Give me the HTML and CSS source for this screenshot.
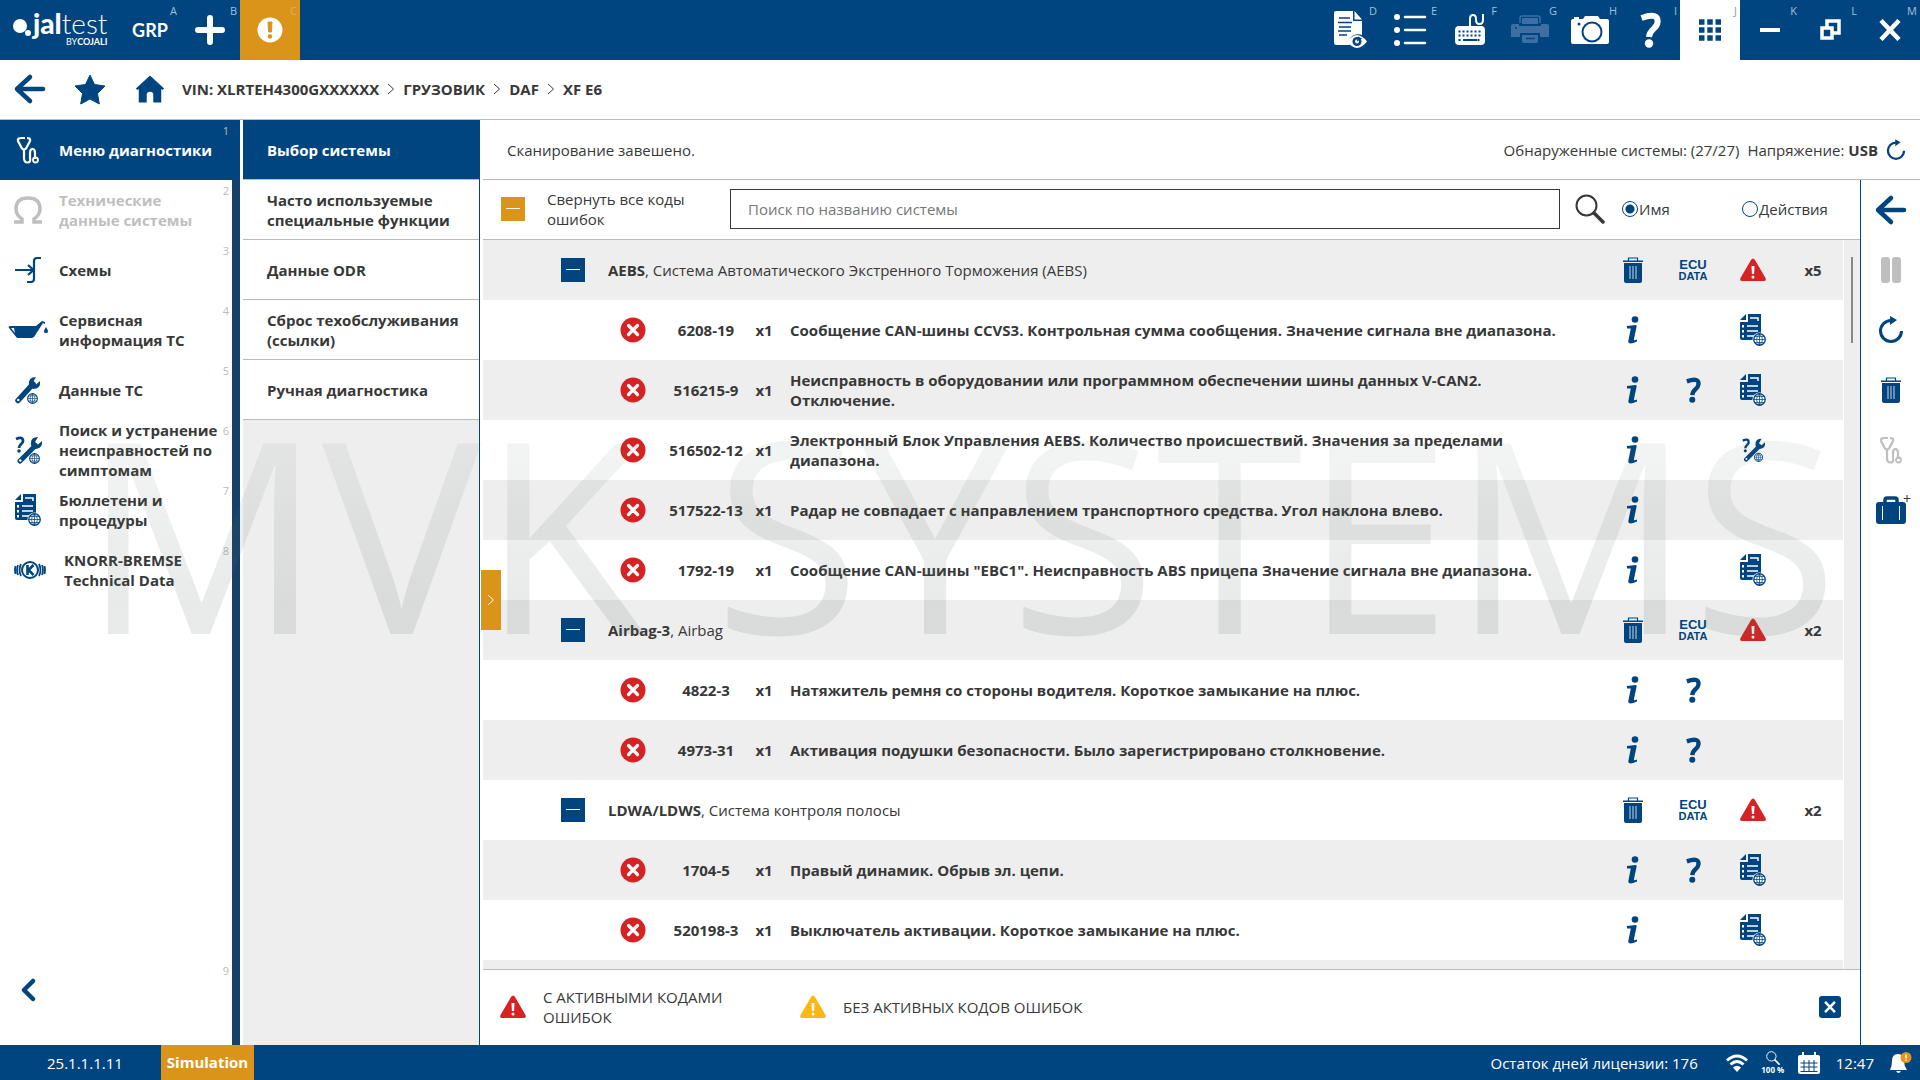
FILE: index.html
```html
<!DOCTYPE html>
<html lang="ru">
<head>
    <meta charset="UTF-8" />
    <meta name="viewport" content="width=device-width, initial-scale=1.0"/>
    <title>Jaltest</title>
    <link rel="stylesheet" href="styles.css">
</head>
<body>

    <!-- Icon set -->
    <svg class="icon-defs" aria-hidden="true">
        <symbol id="i-plus" viewBox="0 0 30 30"><path d="M15 3v24M3 15h24" stroke="currentColor" stroke-width="6" stroke-linecap="round"/></symbol>
        <symbol id="i-alert" viewBox="0 0 26 26"><circle cx="13" cy="13" r="12.5" fill="currentColor"/><path d="M11 5h4l-.6 10h-2.8z" fill="#db941a" stroke="#db941a" stroke-linejoin="round"/><circle cx="13" cy="19.500" r="2.200" fill="#db941a"/></symbol>
        <symbol id="i-arrow" viewBox="0 0 34 34"><path d="M30 17H4M17 5L4 17l13 12" fill="none" stroke="currentColor" stroke-width="4.500" stroke-linecap="round" stroke-linejoin="round"/></symbol>
        <symbol id="i-star" viewBox="0 0 34 34"><path d="M17 3l4.500 9.500 10.500 1.500-7.500 7.500 1.800 10.500-9.300-5-9.300 5L9.500 21.500 2 14l10.500-1.500z" fill="currentColor" stroke="currentColor" stroke-linejoin="round"/></symbol>
        <symbol id="i-home" viewBox="0 0 32 32"><path d="M16 1.500L31 15.500l-1.500 1.500L28 16v14.500h-8.500V22.500q0-3.500-3.500-3.500t-3.500 3.500v8H4V16l-1.500 1L1 15.500z" fill="currentColor"/></symbol>
        <symbol id="i-chevron" viewBox="0 0 8 12"><path d="M1 1l5.500 5L1 11" fill="none" stroke="currentColor"/></symbol>
        <symbol id="i-back" viewBox="0 0 16 24"><path d="M13 3L4 12l9 9" fill="none" stroke="currentColor" stroke-width="4.500" stroke-linecap="round" stroke-linejoin="round"/></symbol>
        <symbol id="i-doceye" viewBox="0 0 34 40"><path d="M3 1h17v10h9v14c-6-2-11 1-14 6q1 3 2 4H3q-2 0-2-2V3q0-2 2-2z" fill="currentColor"/><path d="M21.500 1l7.500 8.500h-7.500z" fill="currentColor"/><path d="M6 8h11M5 12.500h14M6 17h12M5 21h13M6 25h8" stroke="#00457f" stroke-width="1.500"/><path d="M14 31.500q10-13 20 0-10 13-20 0z" fill="currentColor"/><circle cx="24" cy="31.500" r="4.500" fill="#00457f"/><circle cx="24" cy="31.500" r="2" fill="currentColor"/><path d="M24 31.500l1-5 4 2z" fill="#00457f"/></symbol>
        <symbol id="i-list" viewBox="0 0 34 34"><g fill="currentColor"><circle cx="4" cy="4" r="3"/><circle cx="4" cy="17" r="3"/><circle cx="4" cy="30" r="3"/></g><path d="M12 4h20M12 17h20M12 30h20" stroke="currentColor" stroke-width="2.500" stroke-linecap="round"/></symbol>
        <symbol id="i-keyboard" viewBox="0 0 32 34"><path d="M16 14V6q0-4 3-4t3 4v1q0 4 3.500 4T29 7V1" fill="none" stroke="currentColor" stroke-width="2"/><rect x="1" y="13" width="30" height="19" rx="4" fill="currentColor"/><path d="M4.500 18.500h23M4.500 22.500h23M4.500 27h4M23.500 27h4" stroke="#00457f" stroke-width="2" stroke-dasharray="2 2"/><path d="M9 27h14" stroke="#00457f" stroke-width="2"/></symbol>
        <symbol id="i-printer" viewBox="0 0 38 30"><path d="M9 8V3q0-2 2-2h16q2 0 2 2v5" fill="none" stroke="currentColor" stroke-width="1.500"/><path d="M11 3h16v6H11zM2 9h6v2h22V9h6q2 0 2 2v11h-9v-3q0-1-1-1H10q-1 0-1 1v3H0V11q0-2 2-2z" fill="currentColor"/><path d="M11 20h16v6q0 2-2 2H13q-2 0-2-2z" fill="currentColor"/><path d="M15 23.500h9" stroke="#00457f" stroke-width="1.500"/><circle cx="5" cy="13" r="1" fill="#00457f"/></symbol>
        <symbol id="i-camera" viewBox="0 0 38 30"><path d="M2 4h1V2h5v2h4l2-3h13l2 3h7q2 0 2 2v21q0 2-2 2H2q-2 0-2-2V6q0-2 2-2z" fill="currentColor"/><circle cx="21" cy="17" r="9.500" fill="none" stroke="#00457f" stroke-width="2"/><circle cx="8" cy="9" r="1.500" fill="#00457f"/></symbol>
        <symbol id="i-help" viewBox="0 0 22 36"><path d="M2.500 6Q20 0 18.500 10.500C18 17 10.500 17 10 25" fill="none" stroke="currentColor" stroke-width="6"/><circle cx="10" cy="31.500" r="4.200" fill="currentColor"/></symbol>
        <symbol id="i-apps" viewBox="0 0 22 22"><path d="M0 3h22M0 11h22M0 19h22" stroke="currentColor" stroke-width="5.500" stroke-dasharray="5.500 2.750"/></symbol>
        <symbol id="i-min" viewBox="0 0 22 22"><path d="M1 11h20" stroke="currentColor" stroke-width="4"/></symbol>
        <symbol id="i-restore" viewBox="0 0 22 22"><path d="M8 8V2h12v12h-6" fill="none" stroke="currentColor" stroke-width="3.500"/><rect x="3" y="9" width="10" height="10" fill="none" stroke="currentColor" stroke-width="3.500"/></symbol>
        <symbol id="i-close" viewBox="0 0 22 22"><path d="M2 1.500l18 19M20 1.500l-18 19" stroke="currentColor" stroke-width="4.500"/></symbol>
        <symbol id="i-stetho" viewBox="0 0 24 28"><path d="M9 2H6Q1 2 2 5l4 7.500q2 2 4 0L14 5q1-3-3-3" fill="none" stroke="currentColor" stroke-width="2.200"/><path d="M8 13v9q0 4.500 3.500 4.500T14 22v-5q0-4 2.500-4t2.500 4v6" fill="none" stroke="currentColor" stroke-width="2.200"/><circle cx="19.500" cy="24" r="2.500" fill="none" stroke="currentColor" stroke-width="1.800"/></symbol>
        <symbol id="i-omega" viewBox="0 0 30 28"><path d="M1 26h8v-3Q3 19 3 13 3 2 15 2t12 11q0 6-6 10v3h8" fill="none" stroke="currentColor" stroke-width="3.500"/></symbol>
        <symbol id="i-scheme" viewBox="0 0 28 28"><path d="M27 2h-4q-3 0-3 3v18q0 3-3 3h-4M1 14h18M14 9l5.500 5-5.500 5" fill="none" stroke="currentColor" stroke-width="2.200"/></symbol>
        <symbol id="i-oil" viewBox="0 0 40 20"><path d="M8 6h20l6-5 3 1v2l-2-1-9 14-2 1H9L1 8q-1-2 1-2h4zM3 8l4 5-1-5z" fill="currentColor" fill-rule="evenodd"/><path d="M38 7q4 6 0 6t0-6z" fill="currentColor"/></symbol>
        <symbol id="i-globe" viewBox="0 0 12 12"><circle cx="6" cy="6" r="5.300" fill="#fff" stroke="currentColor" stroke-width="1.200"/><path d="M6 .500v11M.500 6h11M1.500 3.200h9M1.500 8.800h9M6 .700Q.500 6 6 11.300 11.500 6 6 .700" fill="none" stroke="currentColor" stroke-width=".700"/></symbol>
        <symbol id="i-wrench" viewBox="0 0 28 28"><path d="M4 24.500L19 8" stroke="currentColor" stroke-width="5.500" stroke-linecap="round"/><path d="M22 1q-8 0-7 8l4 4q8 0 7-8l-4 3.500-3-2.500z" fill="currentColor"/><circle cx="4.300" cy="24" r="1.200" fill="#fff"/><use href="#i-globe" x="13" y="17" width="11" height="11"/></symbol>
        <symbol id="i-wrenchq" viewBox="0 0 28 28"><path d="M2 3q7-3 7 2c0 3-4 3-4 7" fill="none" stroke="currentColor" stroke-width="2.800"/><circle cx="5" cy="15" r="1.800" fill="currentColor"/><path d="M6 25L21 10" stroke="currentColor" stroke-width="5" stroke-linecap="round"/><path d="M24 1q-8 0-7 8l3 4q9 0 8-8l-4 3.500-3-2.500z" fill="currentColor"/><circle cx="6.300" cy="24.500" r="1.200" fill="#fff"/><use href="#i-globe" x="15" y="17" width="11" height="11"/></symbol>
        <symbol id="i-bulletin" viewBox="0 0 26 32"><path d="M8 0h13v26H2q-2 0-2-2V8h8z" fill="currentColor"/><path d="M6 0v6H0z" fill="currentColor"/><path d="M10 4h8v3M7 12h11M7 17h11M7 22h7" fill="none" stroke="#fff" stroke-width="1.500"/><path d="M3 11v2.500M3 16v2.500M3 21v2.500" stroke="#fff" stroke-width="2"/><circle cx="19.500" cy="25.500" r="7" fill="#fff"/><use href="#i-globe" x="13" y="19" width="13" height="13"/></symbol>
        <symbol id="i-knorr" viewBox="0 0 32 20"><circle cx="16" cy="10" r="8" fill="none" stroke="currentColor" stroke-width="2"/><path d="M13.500 5v10M19.500 5l-5 5 5 5" fill="none" stroke="currentColor" stroke-width="2.600"/><path d="M7 4q-3 6 0 12M4 5q-2 5 0 10M1.500 6q-1 4 0 8M25 4q3 6 0 12M28 5q2 5 0 10M30.500 6q1 4 0 8" fill="none" stroke="currentColor" stroke-width="1.800"/></symbol>
        <symbol id="i-search" viewBox="0 0 30 30"><circle cx="11.500" cy="11.500" r="10" fill="none" stroke="currentColor" stroke-width="2"/><path d="M19 19l9 9" stroke="currentColor" stroke-width="3.500" stroke-linecap="round"/></symbol>
        <symbol id="i-minus" viewBox="0 0 14 12"><path d="M0 5.500h14" stroke="currentColor"/></symbol>
        <symbol id="i-trash" viewBox="0 0 20 26"><path d="M0 3.500h20V5H0zM1 6h18v18q0 2-2 2H3q-2 0-2-2z" fill="currentColor"/><path d="M5.500 4V1h9v3" fill="none" stroke="currentColor" stroke-width="1.200"/><path d="M7 9v13M10 9v13M13 9v13" stroke="#fff" stroke-width=".800"/></symbol>
        <symbol id="i-warn" viewBox="0 0 26 24"><path d="M11 2q2-3 4 0l10.500 18q1 3-1.500 3H2q-2.500 0-1.500-3z" fill="currentColor"/><path d="M11.500 8h3l-.400 8h-2.200z" fill="#fff"/><circle cx="13" cy="19" r="1.500" fill="#fff"/></symbol>
        <symbol id="i-fault" viewBox="0 0 26 26"><circle cx="13" cy="13" r="12.500" fill="#d62222"/><path d="M8.500 8.500l9 9M17.500 8.500l-9 9" stroke="#fff" stroke-width="3.200" stroke-linecap="round"/></symbol>
        <symbol id="i-info" viewBox="0 0 14 28"><circle cx="9" cy="3.500" r="3.300" fill="currentColor"/><path d="M1 10l8.500-1q1.500 0 1 2L8 23q-.500 2 3 .500v2Q1 30 2.500 24l2.300-11.500H1z" fill="currentColor"/></symbol>
        <symbol id="i-refresh" viewBox="0 0 26 28"><path d="M23.500 15A10.500 10.500 0 1 1 13 4.500" fill="none" stroke="currentColor" stroke-width="3"/><path d="M12 0l7 4-7 5z" fill="currentColor"/></symbol>
        <symbol id="i-pause" viewBox="0 0 20 26"><rect width="9" height="26" rx="3" fill="currentColor"/><rect x="11" width="9" height="26" rx="3" fill="currentColor"/></symbol>
        <symbol id="i-case" viewBox="0 0 30 28"><path d="M9 7V4q0-2 2-2h8q2 0 2 2v3" fill="none" stroke="currentColor" stroke-width="3.500"/><rect y="6" width="30" height="22" rx="3" fill="currentColor"/><path d="M6.500 10v14M23.500 10v14" stroke="#fff"/></symbol>
        <symbol id="i-wifi" viewBox="0 0 22 18"><path d="M1 6.500q10-9 20 0M4.500 10.500q6.500-6 13 0" fill="none" stroke="currentColor" stroke-width="3"/><path d="M7 13.500q4-3.500 8 0l-4 4.500z" fill="currentColor"/></symbol>
        <symbol id="i-calendar" viewBox="0 0 22 22"><rect y="3" width="22" height="19" rx="2" fill="currentColor"/><path d="M5 0v6M17 0v6" stroke="currentColor" stroke-width="2"/><path d="M2.500 11h17M2.500 15h17M2.500 19.500h17M6 8v12M11 8v12M16 8v12" stroke="#00457f"/></symbol>
        <symbol id="i-bell" viewBox="0 0 22 22"><path d="M8 2q6 0 6 7 0 5 3 9H0q2-4 2-9 0-7 6-7zM6 19h5q-2.500 4-5 0z" fill="currentColor"/><circle cx="16" cy="5.500" r="5.500" fill="#e5931a"/><path d="M16 2.500v4M16 7.500v1.500" stroke="#fff" stroke-width="1.500"/></symbol>
    </svg>

    <!-- Top bar -->
    <header class="topbar">
        <a href="#" class="logo" aria-label="Jaltest by Cojali">
            <svg class="logo-dots" viewBox="0 0 20 18"><circle cx="7" cy="7" r="7" fill="#fff"/><circle cx="15" cy="14" r="3" fill="#fff"/></svg>
            <span class="logo-text">
                <span class="logo-name"><b>jal</b>test</span>
                <span class="logo-sub">BY<b>COJALI</b></span>
            </span>
        </a>
        <button class="tool tool-grp">GRP<span class="key">A</span></button>
        <button class="tool" aria-label="Добавить"><svg width="30" height="30"><use href="#i-plus"/></svg><span class="key">B</span></button>
        <button class="tool tool-alert" aria-label="Предупреждения"><svg width="26" height="26"><use href="#i-alert"/></svg><span class="key">C</span></button>
        <div class="spacer"></div>
        <button class="tool" aria-label="Отчет"><svg width="34" height="40"><use href="#i-doceye"/></svg><span class="key">D</span></button>
        <button class="tool" aria-label="Список"><svg width="34" height="34"><use href="#i-list"/></svg><span class="key">E</span></button>
        <button class="tool" aria-label="Клавиатура"><svg width="32" height="34"><use href="#i-keyboard"/></svg><span class="key">F</span></button>
        <button class="tool tool-off" aria-label="Печать" disabled><svg width="38" height="30"><use href="#i-printer"/></svg><span class="key">G</span></button>
        <button class="tool" aria-label="Снимок экрана"><svg width="38" height="30"><use href="#i-camera"/></svg><span class="key">H</span></button>
        <button class="tool" aria-label="Помощь"><svg width="22" height="36"><use href="#i-help"/></svg><span class="key">I</span></button>
        <button class="tool tool-active" aria-label="Приложения"><svg width="22" height="22"><use href="#i-apps"/></svg><span class="key">J</span></button>
        <button class="tool" aria-label="Свернуть"><svg width="22" height="22"><use href="#i-min"/></svg><span class="key">K</span></button>
        <button class="tool" aria-label="Восстановить"><svg width="22" height="22"><use href="#i-restore"/></svg><span class="key">L</span></button>
        <button class="tool" aria-label="Закрыть"><svg width="22" height="22"><use href="#i-close"/></svg><span class="key">M</span></button>
    </header>

    <!-- Breadcrumbs -->
    <nav class="crumbs">
        <button class="square" aria-label="Назад"><svg width="34" height="34"><use href="#i-arrow"/></svg></button>
        <button class="square" aria-label="Избранное"><svg width="34" height="34"><use href="#i-star"/></svg></button>
        <button class="square" aria-label="Домой"><svg width="30" height="30"><use href="#i-home"/></svg></button>
        <div class="crumb-list">
            <a href="#">VIN: XLRTEH4300GXXXXXX</a>
            <svg width="8" height="12"><use href="#i-chevron"/></svg>
            <a href="#">ГРУЗОВИК</a>
            <svg width="8" height="12"><use href="#i-chevron"/></svg>
            <a href="#">DAF</a>
            <svg width="8" height="12"><use href="#i-chevron"/></svg>
            <a href="#">XF E6</a>
        </div>
    </nav>

    <div class="workspace">
        <!-- Main menu -->
        <nav class="menu">
            <button class="menu-item menu-item-active"><span class="menu-icon"><svg width="24" height="28"><use href="#i-stetho"/></svg></span>Меню диагностики<span class="key">1</span></button>
            <button class="menu-item" disabled><span class="menu-icon"><svg width="30" height="28"><use href="#i-omega"/></svg></span>Технические данные системы<span class="key">2</span></button>
            <button class="menu-item"><span class="menu-icon"><svg width="28" height="28"><use href="#i-scheme"/></svg></span>Схемы<span class="key">3</span></button>
            <button class="menu-item"><span class="menu-icon"><svg width="40" height="20"><use href="#i-oil"/></svg></span>Сервисная информация ТС<span class="key">4</span></button>
            <button class="menu-item"><span class="menu-icon"><svg width="28" height="28"><use href="#i-wrench"/></svg></span>Данные ТС<span class="key">5</span></button>
            <button class="menu-item"><span class="menu-icon"><svg width="28" height="28"><use href="#i-wrenchq"/></svg></span>Поиск и устранение неисправностей по симптомам<span class="key">6</span></button>
            <button class="menu-item"><span class="menu-icon"><svg width="26" height="32"><use href="#i-bulletin"/></svg></span>Бюллетени и процедуры<span class="key">7</span></button>
            <button class="menu-item menu-item-brand"><span class="menu-icon"><svg width="32" height="20"><use href="#i-knorr"/></svg></span>KNORR-BREMSE Technical Data<span class="key">8</span></button>
            <button class="menu-item menu-collapse" aria-label="Свернуть меню"><span class="menu-icon"><svg width="16" height="24"><use href="#i-back"/></svg></span><span class="key">9</span></button>
        </nav>

        <nav class="submenu">
            <a href="#" class="submenu-item submenu-item-active">Выбор системы</a>
            <a href="#" class="submenu-item">Часто используемые специальные функции</a>
            <a href="#" class="submenu-item">Данные ODR</a>
            <a href="#" class="submenu-item">Сброс техобслуживания (ссылки)</a>
            <a href="#" class="submenu-item">Ручная диагностика</a>
        </nav>

        <main class="content">
            <button class="drawer-tab" aria-label="Развернуть панель"><svg width="8" height="12"><use href="#i-chevron"/></svg></button>

            <div class="scan-state">
                <span>Сканирование завешено.</span>
                <div class="spacer"></div>
                <span>Обнаруженные системы: (27/27)</span>
                <span>Напряжение: <b>USB</b></span>
                <button class="plain" aria-label="Обновить напряжение"><svg width="20" height="22"><use href="#i-refresh"/></svg></button>
            </div>

            <div class="body">
                <section class="panel">
                    <div class="filters">
                        <button class="toggle toggle-all" id="collapseAll" aria-label="Свернуть все"><svg width="14" height="12"><use href="#i-minus"/></svg></button>
                        <label for="collapseAll">Свернуть все коды ошибок</label>
                        <input type="text" class="search" aria-label="Поиск" placeholder="Поиск по названию системы">
                        <button class="plain find" aria-label="Найти"><svg width="30" height="30"><use href="#i-search"/></svg></button>
                        <label class="radio"><input type="radio" name="mode" checked>Имя</label>
                        <label class="radio"><input type="radio" name="mode">Действия</label>
                    </div>

                    <div class="list">
                        <div class="list-scroll">
                            <table>
                                <colgroup>
                                    <col class="c-icon"><col class="c-icon"><col class="c-icon"><col class="c-code"><col class="c-count"><col>
                                    <col class="c-icon"><col class="c-icon"><col class="c-icon"><col class="c-icon">
                                </colgroup>
                                <tbody>
                                    <tr class="system">
                                        <td></td>
                                        <td><button class="toggle" aria-label="Свернуть AEBS"><svg width="14" height="12"><use href="#i-minus"/></svg></button></td>
                                        <td class="name" colspan="4"><b>AEBS</b>, Система Автоматического Экстренного Торможения (AEBS)</td>
                                        <td><button class="plain" aria-label="Удалить"><svg width="20" height="26"><use href="#i-trash"/></svg></button></td>
                                        <td><button class="plain ecu">ECU<small>DATA</small></button></td>
                                        <td><svg class="red" width="26" height="24"><use href="#i-warn"/></svg></td>
                                        <td><b>x5</b></td>
                                    </tr>
                                    <tr>
                                        <td></td><td></td>
                                        <td><svg width="26" height="26"><use href="#i-fault"/></svg></td>
                                        <td>6208-19</td><td>x1</td>
                                        <td class="desc">Сообщение CAN-шины CCVS3. Контрольная сумма сообщения. Значение сигнала вне диапазона.</td>
                                        <td><button class="plain" aria-label="Информация"><svg width="14" height="28"><use href="#i-info"/></svg></button></td>
                                        <td></td>
                                        <td><button class="plain" aria-label="Бюллетень"><svg width="26" height="32"><use href="#i-bulletin"/></svg></button></td>
                                        <td></td>
                                    </tr>
                                    <tr>
                                        <td></td><td></td>
                                        <td><svg width="26" height="26"><use href="#i-fault"/></svg></td>
                                        <td>516215-9</td><td>x1</td>
                                        <td class="desc">Неисправность в оборудовании или программном обеспечении шины данных V-CAN2. Отключение.</td>
                                        <td><button class="plain" aria-label="Информация"><svg width="14" height="28"><use href="#i-info"/></svg></button></td>
                                        <td><button class="plain" aria-label="Помощь"><svg width="18" height="26"><use href="#i-help"/></svg></button></td>
                                        <td><button class="plain" aria-label="Бюллетень"><svg width="26" height="32"><use href="#i-bulletin"/></svg></button></td>
                                        <td></td>
                                    </tr>
                                    <tr>
                                        <td></td><td></td>
                                        <td><svg width="26" height="26"><use href="#i-fault"/></svg></td>
                                        <td>516502-12</td><td>x1</td>
                                        <td class="desc">Электронный Блок Управления AEBS. Количество происшествий. Значения за пределами диапазона.</td>
                                        <td><button class="plain" aria-label="Информация"><svg width="14" height="28"><use href="#i-info"/></svg></button></td>
                                        <td></td>
                                        <td><button class="plain" aria-label="Поиск неисправностей"><svg width="24" height="24"><use href="#i-wrenchq"/></svg></button></td>
                                        <td></td>
                                    </tr>
                                    <tr>
                                        <td></td><td></td>
                                        <td><svg width="26" height="26"><use href="#i-fault"/></svg></td>
                                        <td>517522-13</td><td>x1</td>
                                        <td class="desc">Радар не совпадает с направлением транспортного средства. Угол наклона влево.</td>
                                        <td><button class="plain" aria-label="Информация"><svg width="14" height="28"><use href="#i-info"/></svg></button></td>
                                        <td></td><td></td><td></td>
                                    </tr>
                                    <tr>
                                        <td></td><td></td>
                                        <td><svg width="26" height="26"><use href="#i-fault"/></svg></td>
                                        <td>1792-19</td><td>x1</td>
                                        <td class="desc">Сообщение CAN-шины "EBC1". Неисправность ABS прицепа Значение сигнала вне диапазона.</td>
                                        <td><button class="plain" aria-label="Информация"><svg width="14" height="28"><use href="#i-info"/></svg></button></td>
                                        <td></td>
                                        <td><button class="plain" aria-label="Бюллетень"><svg width="26" height="32"><use href="#i-bulletin"/></svg></button></td>
                                        <td></td>
                                    </tr>
                                    <tr class="system">
                                        <td></td>
                                        <td><button class="toggle" aria-label="Свернуть Airbag-3"><svg width="14" height="12"><use href="#i-minus"/></svg></button></td>
                                        <td class="name" colspan="4"><b>Airbag-3</b>, Airbag</td>
                                        <td><button class="plain" aria-label="Удалить"><svg width="20" height="26"><use href="#i-trash"/></svg></button></td>
                                        <td><button class="plain ecu">ECU<small>DATA</small></button></td>
                                        <td><svg class="red" width="26" height="24"><use href="#i-warn"/></svg></td>
                                        <td><b>x2</b></td>
                                    </tr>
                                    <tr>
                                        <td></td><td></td>
                                        <td><svg width="26" height="26"><use href="#i-fault"/></svg></td>
                                        <td>4822-3</td><td>x1</td>
                                        <td class="desc">Натяжитель ремня со стороны водителя. Короткое замыкание на плюс.</td>
                                        <td><button class="plain" aria-label="Информация"><svg width="14" height="28"><use href="#i-info"/></svg></button></td>
                                        <td><button class="plain" aria-label="Помощь"><svg width="18" height="26"><use href="#i-help"/></svg></button></td>
                                        <td></td><td></td>
                                    </tr>
                                    <tr>
                                        <td></td><td></td>
                                        <td><svg width="26" height="26"><use href="#i-fault"/></svg></td>
                                        <td>4973-31</td><td>x1</td>
                                        <td class="desc">Активация подушки безопасности. Было зарегистрировано столкновение.</td>
                                        <td><button class="plain" aria-label="Информация"><svg width="14" height="28"><use href="#i-info"/></svg></button></td>
                                        <td><button class="plain" aria-label="Помощь"><svg width="18" height="26"><use href="#i-help"/></svg></button></td>
                                        <td></td><td></td>
                                    </tr>
                                    <tr class="system">
                                        <td></td>
                                        <td><button class="toggle" aria-label="Свернуть LDWA/LDWS"><svg width="14" height="12"><use href="#i-minus"/></svg></button></td>
                                        <td class="name" colspan="4"><b>LDWA/LDWS</b>, Система контроля полосы</td>
                                        <td><button class="plain" aria-label="Удалить"><svg width="20" height="26"><use href="#i-trash"/></svg></button></td>
                                        <td><button class="plain ecu">ECU<small>DATA</small></button></td>
                                        <td><svg class="red" width="26" height="24"><use href="#i-warn"/></svg></td>
                                        <td><b>x2</b></td>
                                    </tr>
                                    <tr>
                                        <td></td><td></td>
                                        <td><svg width="26" height="26"><use href="#i-fault"/></svg></td>
                                        <td>1704-5</td><td>x1</td>
                                        <td class="desc">Правый динамик. Обрыв эл. цепи.</td>
                                        <td><button class="plain" aria-label="Информация"><svg width="14" height="28"><use href="#i-info"/></svg></button></td>
                                        <td><button class="plain" aria-label="Помощь"><svg width="18" height="26"><use href="#i-help"/></svg></button></td>
                                        <td><button class="plain" aria-label="Бюллетень"><svg width="26" height="32"><use href="#i-bulletin"/></svg></button></td>
                                        <td></td>
                                    </tr>
                                    <tr>
                                        <td></td><td></td>
                                        <td><svg width="26" height="26"><use href="#i-fault"/></svg></td>
                                        <td>520198-3</td><td>x1</td>
                                        <td class="desc">Выключатель активации. Короткое замыкание на плюс.</td>
                                        <td><button class="plain" aria-label="Информация"><svg width="14" height="28"><use href="#i-info"/></svg></button></td>
                                        <td></td>
                                        <td><button class="plain" aria-label="Бюллетень"><svg width="26" height="32"><use href="#i-bulletin"/></svg></button></td>
                                        <td></td>
                                    </tr>
                                    <tr><td colspan="10"></td></tr>
                                </tbody>
                            </table>
                        </div>
                        <div class="track"><div class="thumb"></div></div>
                    </div>

                    <!-- Legend -->
                    <footer class="legend">
                        <div class="legend-item"><svg class="red" width="26" height="24"><use href="#i-warn"/></svg><span>С АКТИВНЫМИ КОДАМИ ОШИБОК</span></div>
                        <div class="legend-item legend-wide"><svg class="yellow" width="26" height="24"><use href="#i-warn"/></svg><span>БЕЗ АКТИВНЫХ КОДОВ ОШИБОК</span></div>
                        <div class="spacer"></div>
                        <button class="legend-close" aria-label="Закрыть"><svg width="12" height="12"><use href="#i-close"/></svg></button>
                    </footer>
                </section>

                <aside class="rail">
                    <button class="square" aria-label="Назад"><svg width="34" height="34"><use href="#i-arrow"/></svg></button>
                    <button class="square" aria-label="Пауза" disabled><svg width="20" height="26"><use href="#i-pause"/></svg></button>
                    <button class="square" aria-label="Повторить"><svg width="26" height="28"><use href="#i-refresh"/></svg></button>
                    <button class="square" aria-label="Удалить"><svg width="20" height="26"><use href="#i-trash"/></svg></button>
                    <button class="square" aria-label="Диагностика" disabled><svg width="24" height="28"><use href="#i-stetho"/></svg></button>
                    <button class="square" aria-label="Чемодан"><svg width="30" height="28"><use href="#i-case"/></svg><span class="key">+</span></button>
                </aside>
            </div>
        </main>
    </div>

    <!-- Status bar -->
    <footer class="status">
        <span class="version">25.1.1.1.11</span>
        <span class="simulation">Simulation</span>
        <div class="spacer"></div>
        <span class="license">Остаток дней лицензии: 176</span>
        <span class="status-icon"><svg width="22" height="18"><use href="#i-wifi"/></svg></span>
        <span class="status-icon status-zoom"><svg width="14" height="14"><use href="#i-search"/></svg><small>100 %</small></span>
        <span class="status-icon"><svg width="22" height="22"><use href="#i-calendar"/></svg></span>
        <time>12:47</time>
        <span class="status-icon"><svg width="22" height="22"><use href="#i-bell"/></svg></span>
    </footer>

    <div class="watermark">MVK SYSTEMS</div>
</body>
</html>
```
FILE: styles.css
```css
* {
    margin: 0;
    padding: 0;
    box-sizing: border-box;
}

:root {
    --blue: #00457f;
    --orange: #db941a;
    --line: #bbb;
    --text: #383838;
}

body {
    font-family: "Open Sans", "Noto Sans", sans-serif;
    font-size: 15px;
    line-height: 20px;
    color: var(--text);
    background: #fff;
    height: 100vh;
    display: flex;
    flex-direction: column;
    overflow: hidden;
}

button {
    font: inherit;
    color: inherit;
    background: none;
    border: none;
    cursor: pointer;
}

a {
    color: inherit;
    text-decoration: none;
}

svg {
    display: block;
    flex: none;
}

.icon-defs {
    display: none;
}

.spacer {
    flex: 1;
}

.key {
    position: absolute;
    top: 4px;
    right: 3px;
    font-size: 11px;
    line-height: 14px;
    font-weight: 400;
    color: #9fc0dd;
}

/* Top bar */
.topbar {
    display: flex;
    height: 60px;
    flex: none;
    background: var(--blue);
    color: #fff;
}

.logo {
    display: flex;
    width: 120px;
    padding: 9px 0 0 13px;
}

.logo-dots {
    width: 20px;
    height: 18px;
    margin-top: 10px;
}

.logo-text {
    display: flex;
    flex-direction: column;
    font-family: Lato, sans-serif;
}

.logo-name {
    font-size: 28px;
    line-height: 28px;
    font-weight: 300;
}

.logo-name b {
    font-weight: 900;
}

.logo-sub {
    font-size: 9px;
    line-height: 10px;
    text-align: right;
}

.tool {
    position: relative;
    width: 60px;
    display: flex;
    align-items: center;
    justify-content: center;
}

.tool-grp {
    font-family: Lato, sans-serif;
    font-size: 18px;
    font-weight: 700;
}

.tool .key {
    font-family: "Open Sans", "Noto Sans", sans-serif;
}

.tool-alert {
    background: var(--orange);
}

.tool-alert .key {
    color: #e6ad52;
}

.tool-off svg {
    color: #3d6fa3;
}

.tool-active {
    background: #fff;
    color: var(--blue);
}

.tool-active .key {
    color: #999;
}

/* Breadcrumbs */
.crumbs {
    display: flex;
    align-items: center;
    height: 60px;
    flex: none;
    padding-bottom: 1px;
    border-bottom: 1px solid var(--line);
}

.square {
    position: relative;
    width: 60px;
    height: 60px;
    display: flex;
    align-items: center;
    justify-content: center;
    color: var(--blue);
}

.crumbs .square {
    height: 58px;
}

.square:disabled {
    color: #bfbfbf;
}

.square .key {
    font-size: 14px;
    color: var(--text);
    top: 12px;
    right: 10px;
}

.crumb-list {
    display: flex;
    align-items: center;
    gap: 8px;
    padding-left: 2px;
    font-weight: 700;
}

.workspace {
    flex: 1;
    min-height: 0;
    display: flex;
}

/* Main menu */
.menu {
    width: 240px;
    flex: none;
    display: flex;
    flex-direction: column;
    padding-bottom: 25px;
    border-right: 8px solid #14406a;
}

.menu-item {
    position: relative;
    display: flex;
    align-items: center;
    height: 60px;
    flex: none;
    padding-right: 8px;
    font-weight: 700;
    text-align: left;
}

.menu-item:disabled {
    color: #bfbfbf;
}

.menu-item .key {
    color: #bbb;
}

.menu-item-active {
    margin-right: -8px;
    background: var(--blue);
    color: #fff;
}

.menu-item-active .key {
    right: 11px;
}

.menu-icon {
    width: 56px;
    margin-right: 3px;
    flex: none;
    display: flex;
    justify-content: center;
    color: var(--blue);
}

.menu-item-active .menu-icon,
.menu-item:disabled .menu-icon {
    color: inherit;
}

.menu-item-brand .menu-icon {
    width: 60px;
    margin-right: 4px;
}

.menu-collapse {
    margin-top: auto;
}

/* Second level menu */
.submenu {
    width: 237px;
    margin-left: 3px;
    flex: none;
    background: #eee;
    border-right: 1px solid var(--blue);
}

.submenu-item {
    display: flex;
    align-items: center;
    height: 60px;
    padding: 0 12px 0 24px;
    background: #fff;
    border-bottom: 1px solid var(--line);
    font-weight: 700;
}

.submenu-item-active {
    background: var(--blue);
    color: #fff;
}

/* Content */
.content {
    position: relative;
    flex: 1;
    min-width: 0;
    display: flex;
    flex-direction: column;
    padding-left: 3px;
}

.drawer-tab {
    position: absolute;
    left: 1px;
    top: 450px;
    width: 20px;
    height: 60px;
    display: flex;
    align-items: center;
    justify-content: center;
    background: var(--orange);
    color: #fff;
}

.scan-state {
    display: flex;
    align-items: center;
    gap: 8px;
    height: 60px;
    flex: none;
    padding: 0 14px 0 24px;
    border-bottom: 1px solid var(--line);
}

.plain {
    color: var(--blue);
}

.body {
    flex: 1;
    min-height: 0;
    display: flex;
}

.panel {
    flex: 1;
    min-width: 0;
    display: flex;
    flex-direction: column;
}

.filters {
    display: grid;
    grid-template-columns: 60px 187px 1fr 60px 120px 120px;
    align-items: center;
    height: 60px;
    flex: none;
    padding-bottom: 1px;
    border-bottom: 1px solid var(--line);
}

.filters > label {
    padding: 0 40px 0 4px;
}

.toggle {
    width: 24px;
    height: 24px;
    display: flex;
    align-items: center;
    justify-content: center;
    margin: 0 auto;
    background: var(--blue);
    color: #fff;
}

.toggle-all {
    background: var(--orange);
}

.search {
    width: 100%;
    height: 40px;
    padding: 0 17px;
    border: 1px solid var(--text);
    font: inherit;
    color: inherit;
}

.search::placeholder {
    color: #777;
}

.find {
    color: var(--text);
    display: flex;
    justify-content: center;
}

.filters > .radio {
    display: flex;
    align-items: center;
    gap: 1px;
    padding: 0 0 0 2px;
}

.radio input {
    appearance: none;
    width: 16px;
    height: 16px;
    border: 1px solid var(--blue);
    border-radius: 50%;
    background: #fff;
}

.radio input:checked {
    background: radial-gradient(circle, var(--blue) 4px, #fff 5px);
}

.list {
    flex: 1;
    min-height: 0;
    display: flex;
}

.list-scroll {
    flex: 1;
    min-width: 0;
    overflow: hidden;
}

table {
    width: 100%;
    table-layout: fixed;
    border-collapse: collapse;
}

.c-icon {
    width: 60px;
}

.c-code {
    width: 86px;
}

.c-count {
    width: 30px;
}

tr {
    height: 60px;
    font-weight: 700;
}

tr:nth-child(odd) {
    background: #eee;
}

td {
    text-align: center;
    vertical-align: middle;
    white-space: nowrap;
}

td svg,
td .plain {
    display: block;
    margin: 0 auto;
}

.system {
    font-weight: 400;
}

.name {
    text-align: left;
    padding-left: 5px;
}

.desc {
    text-align: left;
    white-space: normal;
    padding: 0 20px 0 11px;
}

.ecu {
    font-family: "Liberation Sans", sans-serif;
    font-size: 13px;
    line-height: 12px;
    font-weight: 700;
}

.ecu small {
    display: block;
    font-size: 11px;
    line-height: 11px;
}

.red {
    color: #d62222;
}

.yellow {
    color: #fdb714;
}

.track {
    width: 16px;
    margin-left: 1px;
    padding: 17px 7px 0;
    background: #eee;
}

.thumb {
    width: 2px;
    height: 86px;
    background: #888;
}

.legend {
    display: flex;
    align-items: center;
    height: 76px;
    flex: none;
    padding: 0 19px 2px 0;
    border-top: 1px solid var(--line);
}

.legend-item {
    width: 300px;
    display: flex;
    align-items: center;
    padding-left: 17px;
    gap: 17px;
}

.legend-item span {
    padding-right: 20px;
}

.legend-wide {
    width: auto;
}

.legend-close {
    width: 22px;
    height: 22px;
    display: flex;
    align-items: center;
    justify-content: center;
    background: var(--blue);
    color: #fff;
    border-radius: 3px;
}

.rail {
    width: 60px;
    flex: none;
    border-left: 1px solid var(--blue);
}

/* Status bar */
.status {
    display: flex;
    align-items: center;
    height: 35px;
    flex: none;
    background: var(--blue);
    color: #fff;
}

.version {
    padding: 0 38px 0 47px;
}

.simulation {
    padding: 0 6px;
    line-height: 35px;
    background: var(--orange);
    font-weight: 700;
}

.license {
    margin-right: 20px;
}

.status-icon {
    width: 38px;
    display: flex;
    flex-direction: column;
    align-items: center;
}

.status-zoom {
    width: 34px;
}

.status-icon small {
    font-size: 8px;
    line-height: 10px;
    font-weight: 700;
}

.status time {
    padding: 0 8px;
}

.watermark {
    position: absolute;
    inset: 0;
    display: flex;
    align-items: center;
    justify-content: center;
    padding-bottom: 20px;
    font-size: 267px;
    line-height: 1;
    white-space: nowrap;
    color: transparent;
    background: linear-gradient(rgba(90, 110, 100, 0.08) 42%, rgba(90, 110, 100, 0.14) 56%);
    background-clip: text;
    -webkit-background-clip: text;
    pointer-events: none;
}
```
